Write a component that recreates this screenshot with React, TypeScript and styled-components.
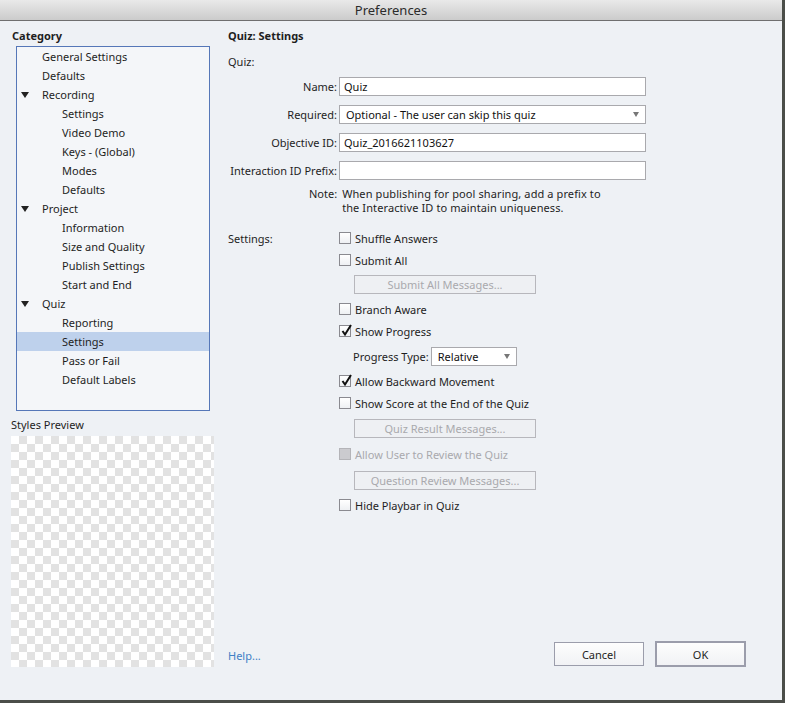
import React from "react";
import styled, { createGlobalStyle } from "styled-components";

const GlobalStyle = createGlobalStyle`
  html, body {
    margin: 0;
    padding: 0;
    background: #4b4e49;
  }
  body {
    font-family: "Noto Sans", "DejaVu Sans", sans-serif;
    font-size: 11px;
    color: #1e1e1e;
  }
`;

const Window = styled.div`
  width: 782px;
  height: 700px;
  display: flex;
  flex-direction: column;
  background: #eef1f5;
  overflow: hidden;
`;

const TitleBar = styled.div`
  height: 20px;
  flex: none;
  display: flex;
  align-items: center;
  justify-content: center;
  font-size: 13px;
  color: #2b2b2b;
  background: linear-gradient(#e9e9e9, #cbcbcb);
  border-bottom: 1px solid #6f6f6f;
`;

const Body = styled.div`
  flex: 1;
  display: flex;
`;

const Sidebar = styled.div`
  width: 215px;
  flex: none;
  padding-left: 11px;
  box-sizing: border-box;
  display: flex;
  flex-direction: column;
`;

const Heading = styled.div<{ $left?: number }>`
  font-weight: bold;
  height: 14px;
  line-height: 14px;
  margin-top: 8px;
  padding-left: ${(p) => p.$left ?? 0}px;
`;

const TreeBox = styled.div`
  margin: 3px 0 0 5px;
  width: 194px;
  height: 365px;
  box-sizing: border-box;
  border: 1px solid #5577b8;
  background: #f4f6f9;
`;

const TreeRow = styled.div<{ $level: number; $selected?: boolean }>`
  height: 19px;
  display: flex;
  align-items: center;
  position: relative;
  padding-left: ${(p) => (p.$level === 0 ? 25 : 45)}px;
  background: ${(p) => (p.$selected ? "#bed1ec" : "transparent")};
`;

const Twisty = styled.span`
  position: absolute;
  left: 4px;
  top: 7px;
  width: 0;
  height: 0;
  border-left: 4px solid transparent;
  border-right: 4px solid transparent;
  border-top: 6px solid #222;
`;

const PreviewLabel = styled.div`
  margin-top: 7px;
  height: 14px;
  line-height: 14px;
`;

const Checker = styled.div`
  margin-top: 4px;
  width: 203px;
  height: 231px;
  background-color: #ffffff;
  background-image: conic-gradient(
    #e2e2e2 0 25%,
    transparent 0 50%,
    #e2e2e2 0 75%,
    transparent 0
  );
  background-size: 16px 16px;
`;

const Main = styled.div`
  flex: 1;
  padding: 0 36px 33px 13px;
  display: flex;
  flex-direction: column;
`;

const SectionLabel = styled.div`
  margin-top: 12px;
  height: 14px;
  line-height: 14px;
`;

const FormGrid = styled.div`
  margin-top: 8px;
  display: grid;
  grid-template-columns: 109px 307px;
  column-gap: 2px;
  row-gap: 9px;
  align-items: center;
`;

const FieldLabel = styled.div`
  text-align: right;
  white-space: nowrap;
`;

const TextInput = styled.div`
  height: 19px;
  box-sizing: border-box;
  border: 1px solid #a9a9ad;
  background: #ffffff;
  padding-left: 4px;
  display: flex;
  align-items: center;
  color: #111;
`;

const SelectBox = styled.div<{ $width?: number }>`
  height: 19px;
  width: ${(p) => (p.$width ? `${p.$width}px` : "auto")};
  box-sizing: border-box;
  border: 1px solid #a9a9ad;
  background: #ffffff;
  padding: 0 6px;
  display: flex;
  align-items: center;
  justify-content: space-between;
  color: #111;
`;

const Arrow = styled.span`
  width: 0;
  height: 0;
  border-left: 3.5px solid transparent;
  border-right: 3.5px solid transparent;
  border-top: 5px solid #777;
`;

const Note = styled.div`
  margin-top: 7px;
  display: flex;
  padding-left: 81px;
  line-height: 14px;
`;

const NoteBody = styled.div`
  padding-left: 5px;
  letter-spacing: 0.1px;
`;

const SettingsGrid = styled.div`
  margin-top: 12px;
  display: grid;
  grid-template-columns: 111px 1fr;
`;

const SettingsList = styled.div`
  display: flex;
  flex-direction: column;
`;

const Row = styled.div<{ $h: number; $indent?: number }>`
  height: ${(p) => p.$h}px;
  display: flex;
  align-items: center;
  padding-left: ${(p) => p.$indent ?? 0}px;
`;

const Box = styled.span<{ $disabled?: boolean }>`
  width: 12px;
  height: 12px;
  box-sizing: border-box;
  border: 1px solid ${(p) => (p.$disabled ? "#b4b4b8" : "#8a8a90")};
  background: ${(p) => (p.$disabled ? "#cbcbcf" : "linear-gradient(#ffffff, #eef0f3)")};
  margin-right: 4px;
  position: relative;
  flex: none;
`;

const Tick = styled.svg`
  position: absolute;
  left: 0px;
  top: -3px;
`;

const CheckText = styled.span<{ $disabled?: boolean }>`
  color: ${(p) => (p.$disabled ? "#a9a9ad" : "#1e1e1e")};
`;

const MsgButton = styled.div`
  margin-left: 15px;
  width: 182px;
  height: 19px;
  box-sizing: border-box;
  border: 1px solid #b7b7bc;
  background: #eef0f3;
  color: #a9a9ad;
  display: flex;
  align-items: center;
  justify-content: center;
`;

const InlineLabel = styled.span`
  margin-right: 2px;
`;

const Footer = styled.div`
  margin-top: auto;
  display: flex;
  align-items: center;
`;

const HelpLink = styled.a`
  color: #3f80c5;
  text-decoration: none;
  margin-top: 2px;
`;

const Buttons = styled.div`
  margin-left: auto;
  display: flex;
  align-items: center;
  gap: 11px;
`;

const DialogButton = styled.div<{ $primary?: boolean }>`
  width: ${(p) => (p.$primary ? 91 : 90)}px;
  height: ${(p) => (p.$primary ? 26 : 24)}px;
  box-sizing: border-box;
  border: ${(p) => (p.$primary ? 2 : 1)}px solid #9b9dab;
  background: linear-gradient(#fdfdfd, #f1f2f5);
  display: flex;
  align-items: center;
  justify-content: center;
  color: #1e1e1e;
`;

type TreeItem = { label: string; level: number; open?: boolean; selected?: boolean };

const tree: TreeItem[] = [
  { label: "General Settings", level: 0 },
  { label: "Defaults", level: 0 },
  { label: "Recording", level: 0, open: true },
  { label: "Settings", level: 1 },
  { label: "Video Demo", level: 1 },
  { label: "Keys - (Global)", level: 1 },
  { label: "Modes", level: 1 },
  { label: "Defaults", level: 1 },
  { label: "Project", level: 0, open: true },
  { label: "Information", level: 1 },
  { label: "Size and Quality", level: 1 },
  { label: "Publish Settings", level: 1 },
  { label: "Start and End", level: 1 },
  { label: "Quiz", level: 0, open: true },
  { label: "Reporting", level: 1 },
  { label: "Settings", level: 1, selected: true },
  { label: "Pass or Fail", level: 1 },
  { label: "Default Labels", level: 1 },
];

function Check({ label, checked, disabled, h = 22 }: { label: string; checked?: boolean; disabled?: boolean; h?: number }) {
  return (
    <Row $h={h}>
      <Box $disabled={disabled}>
        {checked && (
          <Tick width="13" height="14" viewBox="0 0 13 14">
            <path d="M2.5 8 L5 11.5 L11 2" fill="none" stroke="#111" strokeWidth="2" />
          </Tick>
        )}
      </Box>
      <CheckText $disabled={disabled}>{label}</CheckText>
    </Row>
  );
}

export default function App() {
  return (
    <>
      <GlobalStyle />
      <Window>
        <TitleBar>Preferences</TitleBar>
        <Body>
          <Sidebar>
            <Heading $left={1}>Category</Heading>
            <TreeBox>
              {tree.map((t, i) => (
                <TreeRow key={i} $level={t.level} $selected={t.selected}>
                  {t.open && <Twisty />}
                  {t.label}
                </TreeRow>
              ))}
            </TreeBox>
            <PreviewLabel>Styles Preview</PreviewLabel>
            <Checker />
          </Sidebar>
          <Main>
            <Heading>Quiz: Settings</Heading>
            <SectionLabel>Quiz:</SectionLabel>
            <FormGrid>
              <FieldLabel>Name:</FieldLabel>
              <TextInput>Quiz</TextInput>
              <FieldLabel>Required:</FieldLabel>
              <SelectBox>
                <span>Optional - The user can skip this quiz</span>
                <Arrow />
              </SelectBox>
              <FieldLabel>Objective ID:</FieldLabel>
              <TextInput>Quiz_2016621103627</TextInput>
              <FieldLabel>Interaction ID Prefix:</FieldLabel>
              <TextInput />
            </FormGrid>
            <Note>
              <span>Note:</span>
              <NoteBody>
                When publishing for pool sharing, add a prefix to
                <br />
                the Interactive ID to maintain uniqueness.
              </NoteBody>
            </Note>
            <SettingsGrid>
              <Row $h={22}>Settings:</Row>
              <SettingsList>
                <Check label="Shuffle Answers" />
                <Check label="Submit All" />
                <Row $h={27}>
                  <MsgButton>Submit All Messages...</MsgButton>
                </Row>
                <Check label="Branch Aware" />
                <Check label="Show Progress" checked />
                <Row $h={28} $indent={14}>
                  <InlineLabel>Progress Type:</InlineLabel>
                  <SelectBox $width={86}>
                    <span>Relative</span>
                    <Arrow />
                  </SelectBox>
                </Row>
                <Check label="Allow Backward Movement" checked />
                <Check label="Show Score at the End of the Quiz" />
                <Row $h={28}>
                  <MsgButton>Quiz Result Messages...</MsgButton>
                </Row>
                <Check label="Allow User to Review the Quiz" disabled h={24} />
                <Row $h={29}>
                  <MsgButton>Question Review Messages...</MsgButton>
                </Row>
                <Check label="Hide Playbar in Quiz" h={20} />
              </SettingsList>
            </SettingsGrid>
            <Footer>
              <HelpLink href="#">Help...</HelpLink>
              <Buttons>
                <DialogButton>Cancel</DialogButton>
                <DialogButton $primary>OK</DialogButton>
              </Buttons>
            </Footer>
          </Main>
        </Body>
      </Window>
    </>
  );
}
